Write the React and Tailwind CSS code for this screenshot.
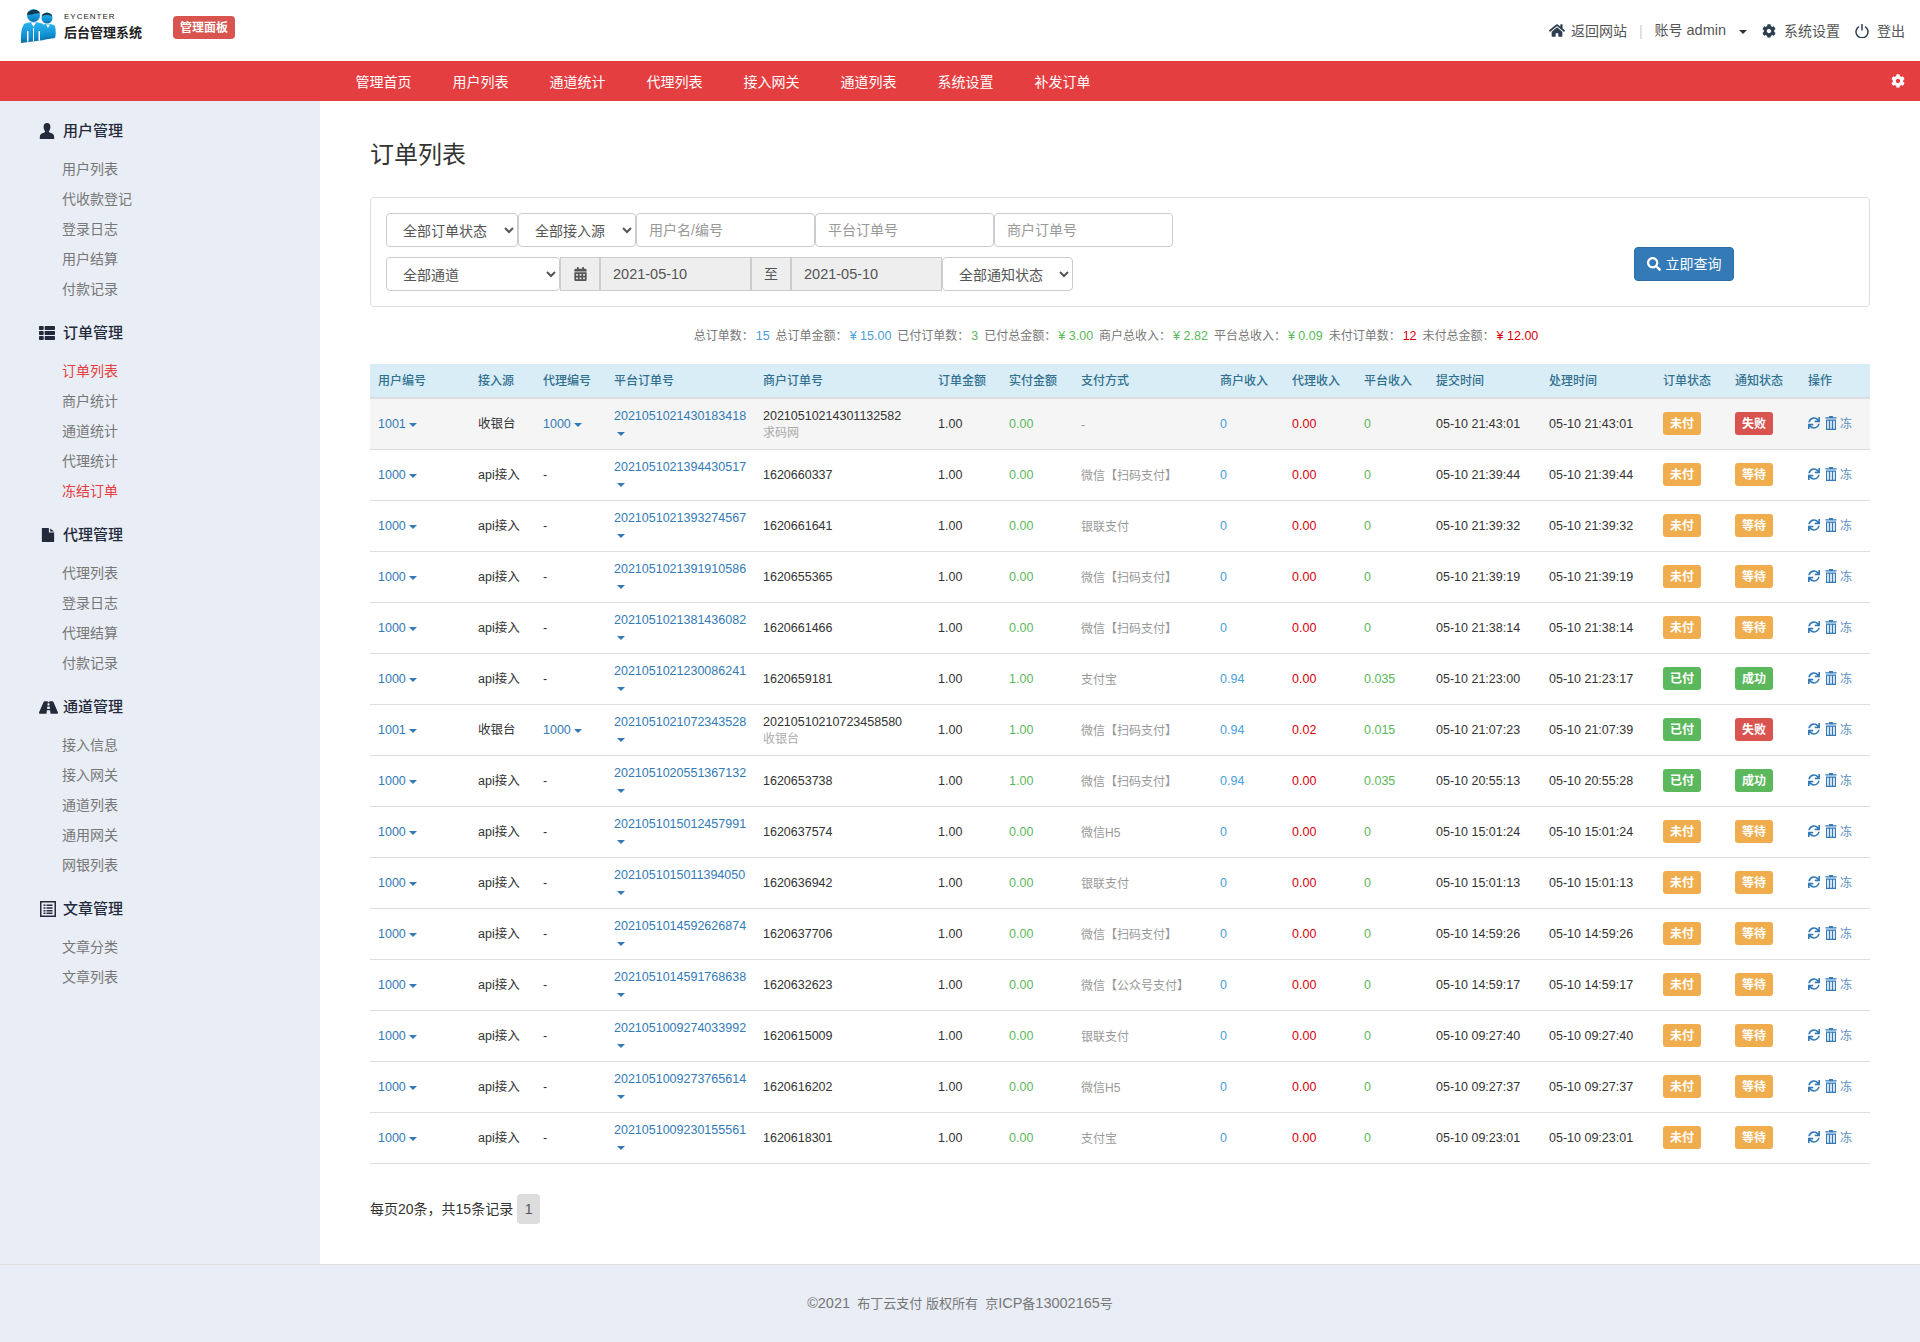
import React from "react";
import { FaThList, FaRoad, FaHome, FaCog, FaSearch, FaCalendarAlt, FaSync } from "react-icons/fa";

const FONT = "font-['Liberation_Sans','Noto_Sans_CJK_SC',sans-serif]";

const SIDE = [
  { title: "用户管理", icon: "user", items: ["用户列表", "代收款登记", "登录日志", "用户结算", "付款记录"] },
  { title: "订单管理", icon: "list", items: ["订单列表", "商户统计", "通道统计", "代理统计", "冻结订单"], active: ["订单列表", "冻结订单"] },
  { title: "代理管理", icon: "file", items: ["代理列表", "登录日志", "代理结算", "付款记录"] },
  { title: "通道管理", icon: "road", items: ["接入信息", "接入网关", "通道列表", "通用网关", "网银列表"] },
  { title: "文章管理", icon: "article", items: ["文章分类", "文章列表"] },
];

const NAV = ["管理首页", "用户列表", "通道统计", "代理列表", "接入网关", "通道列表", "系统设置", "补发订单"];

const COLS = [
  ["用户编号", "w-[100px]"],
  ["接入源", "w-[65px]"],
  ["代理编号", "w-[71px]"],
  ["平台订单号", "w-[149px]"],
  ["商户订单号", "w-[175px]"],
  ["订单金额", "w-[71px]"],
  ["实付金额", "w-[72px]"],
  ["支付方式", "w-[139px]"],
  ["商户收入", "w-[72px]"],
  ["代理收入", "w-[72px]"],
  ["平台收入", "w-[72px]"],
  ["提交时间", "w-[113px]"],
  ["处理时间", "w-[114px]"],
  ["订单状态", "w-[72px]"],
  ["通知状态", "w-[73px]"],
  ["操作", "w-[70px]"],
];

const SCAN = "微信【扫码支付】";

// uid, source, agent, platform no, merchant no, merchant note, paid, method, merchant, agent income, platform, submit, done, notify
const ROWS = [
  ["1001", "收银台", "1000", "2021051021430183418", "20210510214301132582", "求码网", "0.00", "-", "0", "0.00", "0", "21:43:01", "21:43:01", "失败"],
  ["1000", "api接入", "-", "2021051021394430517", "1620660337", "", "0.00", SCAN, "0", "0.00", "0", "21:39:44", "21:39:44", "等待"],
  ["1000", "api接入", "-", "2021051021393274567", "1620661641", "", "0.00", "银联支付", "0", "0.00", "0", "21:39:32", "21:39:32", "等待"],
  ["1000", "api接入", "-", "2021051021391910586", "1620655365", "", "0.00", SCAN, "0", "0.00", "0", "21:39:19", "21:39:19", "等待"],
  ["1000", "api接入", "-", "2021051021381436082", "1620661466", "", "0.00", SCAN, "0", "0.00", "0", "21:38:14", "21:38:14", "等待"],
  ["1000", "api接入", "-", "2021051021230086241", "1620659181", "", "1.00", "支付宝", "0.94", "0.00", "0.035", "21:23:00", "21:23:17", "成功"],
  ["1001", "收银台", "1000", "2021051021072343528", "20210510210723458580", "收银台", "1.00", SCAN, "0.94", "0.02", "0.015", "21:07:23", "21:07:39", "失败"],
  ["1000", "api接入", "-", "2021051020551367132", "1620653738", "", "1.00", SCAN, "0.94", "0.00", "0.035", "20:55:13", "20:55:28", "成功"],
  ["1000", "api接入", "-", "2021051015012457991", "1620637574", "", "0.00", "微信H5", "0", "0.00", "0", "15:01:24", "15:01:24", "等待"],
  ["1000", "api接入", "-", "2021051015011394050", "1620636942", "", "0.00", "银联支付", "0", "0.00", "0", "15:01:13", "15:01:13", "等待"],
  ["1000", "api接入", "-", "2021051014592626874", "1620637706", "", "0.00", SCAN, "0", "0.00", "0", "14:59:26", "14:59:26", "等待"],
  ["1000", "api接入", "-", "2021051014591768638", "1620632623", "", "0.00", "微信【公众号支付】", "0", "0.00", "0", "14:59:17", "14:59:17", "等待"],
  ["1000", "api接入", "-", "2021051009274033992", "1620615009", "", "0.00", "银联支付", "0", "0.00", "0", "09:27:40", "09:27:40", "等待"],
  ["1000", "api接入", "-", "2021051009273765614", "1620616202", "", "0.00", "微信H5", "0", "0.00", "0", "09:27:37", "09:27:37", "等待"],
  ["1000", "api接入", "-", "2021051009230155561", "1620618301", "", "0.00", "支付宝", "0", "0.00", "0", "09:23:01", "09:23:01", "等待"],
];

const BADGE = {
  未付: "bg-[#f0ad4e]",
  已付: "bg-[#5cb85c]",
  失败: "bg-[#d9534f]",
  等待: "bg-[#f0ad4e]",
  成功: "bg-[#5cb85c]",
};

function Logo() {
  return (
    <svg viewBox="0 0 36 36" className="w-[38px] h-[36px] shrink-0">
      <defs>
        <linearGradient id="lg" x1="0" y1="0" x2="0" y2="1">
          <stop offset="0" stopColor="#2ab4f0" />
          <stop offset="0.7" stopColor="#0f8fd0" />
          <stop offset="1" stopColor="#0a6a9e" />
        </linearGradient>
      </defs>
      <circle cx="27" cy="11" r="5.5" fill="url(#lg)" />
      <path d="M21.5 9.5 C23 4.5 31 4.5 32.5 9.5 C30 7.5 24 7.5 21.5 9.5Z" fill="#12384f" />
      <path d="M21 19 C25 16 31 16 35 19 C36 24 36 28 35 31 L22 33Z" fill="url(#lg)" />
      <path d="M26 17.5 L28 21 L30 17.5Z" fill="#fff" />
      <circle cx="13.5" cy="8.5" r="6.5" fill="url(#lg)" />
      <path d="M7 7.5 C8 2 19 1 20 6.5 C16 5 11 9 7 7.5Z" fill="#12384f" />
      <path d="M4 17 C8 14.5 19 14.5 23 17 C25 22 25 28 24.5 33 L1 36 C0.5 28 1.5 21 4 17Z" fill="url(#lg)" />
      <path d="M11 15.5 L13.5 20 L16 15.5Z" fill="#fff" />
      <path d="M7 24 L8.5 24 L8.5 34.5 L7 34.7Z M18.5 24 L20 24 L20 33.6 L18.5 33.8Z M13 21 L14 21 L14 34 L13 34.1Z" fill="#fff" />
    </svg>
  );
}

function SideIcon({ name }) {
  if (name === "user") {
    return (
      <svg viewBox="0 0 16 16" className="w-[16px] h-[16px]" fill="currentColor">
        <path d="M8 0c2.3 0 3.4 1.7 3.4 3.9 0 1.6-.6 3-1.3 4-.4.6-.3 1.1.3 1.4 1.9.9 4.2 1.6 4.6 3.2.2.9.2 2 .2 3.5H.8c0-1.5 0-2.6.2-3.5.4-1.6 2.7-2.3 4.6-3.2.6-.3.7-.8.3-1.4-.7-1-1.3-2.4-1.3-4C4.6 1.7 5.7 0 8 0z" />
      </svg>
    );
  }
  if (name === "list") return <FaThList className="w-[16px] h-[16px]" />;
  if (name === "file") {
    return (
      <svg viewBox="0 0 16 16" className="ml-[2px] w-[14px] h-[16px]" fill="currentColor">
        <path d="M1 0h8v5h6v11H1z" />
        <path d="M10.5 0.5 15 4h-4.5z" />
      </svg>
    );
  }
  if (name === "road") return <FaRoad className="w-[19px] h-[17px]" />;
  return (
    <svg viewBox="0 0 16 16" className="ml-[1px] w-[16px] h-[16px]" fill="currentColor">
      <path fillRule="evenodd" d="M0 0h16v16H0zM1.5 1.5v13h13v-13z" />
      <path d="M3.5 3.5h2v1.5h-2zM6.5 3.5h6v1.5h-6zM3.5 6.2h2v1.5h-2zM6.5 6.2h6v1.5h-6zM3.5 8.9h2v1.5h-2zM6.5 8.9h6v1.5h-6zM3.5 11.5h2V13h-2zM6.5 11.5h6V13h-6z" />
    </svg>
  );
}

function Caret({ color = "border-t-[#337ab7]" }) {
  return <span className={`inline-block w-0 h-0 border-x-[4px] border-t-[4px] border-x-transparent align-middle ${color}`} />;
}

function TrashIcon() {
  return (
    <svg viewBox="0 0 12 14" className="w-[12px] h-[14px]" fill="currentColor">
      <path d="M4 0h4v1.2h3.6v1.3H.4V1.2H4z" />
      <path fillRule="evenodd" d="M1 3.6h10V14H1zM2.2 4.8v8h1.6v-8zm3 0v8h1.6v-8zm3 0v8h1.6v-8z" />
    </svg>
  );
}

function PowerIcon() {
  return (
    <svg viewBox="0 0 14 14" className="w-[14px] h-[14px]" fill="none" stroke="currentColor" strokeWidth="1.5">
      <path d="M4 2.6a6 6 0 1 0 6 0" />
      <path d="M7 0v6.5" />
    </svg>
  );
}

function Sidebar() {
  return (
    <aside className="w-80 shrink-0 bg-[#e9edf5] pt-[15px]">
      {SIDE.map((group) => (
        <div key={group.title} className="mb-[14px]">
          <div className="h-[30px] mb-2 flex items-center text-[15px] font-medium text-[#232a3b]">
            <span className="w-[63px] pl-[39px] flex items-center shrink-0">
              <SideIcon name={group.icon} />
            </span>
            {group.title}
          </div>
          {group.items.map((item) => (
            <div
              key={item}
              className={`h-[30px] pl-[62px] flex items-center text-sm ${
                group.active?.includes(item) ? "text-[#e53e41]" : "text-[#777]"
              }`}
            >
              {item}
            </div>
          ))}
        </div>
      ))}
    </aside>
  );
}

function Select({ label, width }) {
  return (
    <select className={`${width} h-[34px] pl-3 pt-[2px] border border-[#ccc] rounded bg-white text-sm text-[#555]`} defaultValue={label}>
      <option>{label}</option>
    </select>
  );
}

function TextInput({ placeholder }) {
  return (
    <input
      placeholder={placeholder}
      className="w-[179px] h-[34px] px-3 border border-[#ccc] rounded bg-white text-sm text-[#555] placeholder:text-[#999]"
    />
  );
}

function Addon({ children }) {
  return (
    <span className="w-[40px] h-[34px] flex items-center justify-center border border-[#ccc] bg-[#eee] text-sm text-[#555]">
      {children}
    </span>
  );
}

function DateBox({ value }) {
  return (
    <span className="w-[151px] h-[34px] pl-3 pt-[2px] flex items-center border border-[#ccc] bg-[#eee] text-[14.5px] text-[#555]">
      {value}
    </span>
  );
}

function Filter() {
  return (
    <div className="h-[110px] border border-[#ddd] rounded px-[15px] pt-[15px] flex items-start">
      <div className="flex flex-col gap-[10px]">
        <div className="flex">
          <Select label="全部订单状态" width="w-[132px]" />
          <Select label="全部接入源" width="w-[118px]" />
          <TextInput placeholder="用户名/编号" />
          <TextInput placeholder="平台订单号" />
          <TextInput placeholder="商户订单号" />
        </div>
        <div className="flex">
          <Select label="全部通道" width="w-[174px]" />
          <Addon>
            <FaCalendarAlt className="w-[13px] h-[14px]" />
          </Addon>
          <DateBox value="2021-05-10" />
          <Addon>至</Addon>
          <DateBox value="2021-05-10" />
          <Select label="全部通知状态" width="w-[131px]" />
        </div>
      </div>
      <button className="ml-auto mr-[120px] mt-[34px] w-[100px] h-[34px] flex items-center justify-center gap-[5px] rounded bg-[#337ab7] border border-[#2e6da4] text-sm text-white">
        <FaSearch className="w-[14px] h-[14px]" />
        立即查询
      </button>
    </div>
  );
}

function Stats() {
  const items = [
    ["总订单数：", "15", "text-[#4a9edb]"],
    ["总订单金额：", "¥ 15.00", "text-[#4a9edb]"],
    ["已付订单数：", "3", "text-[#5cb85c]"],
    ["已付总金额：", "¥ 3.00", "text-[#5cb85c]"],
    ["商户总收入：", "¥ 2.82", "text-[#5cb85c]"],
    ["平台总收入：", "¥ 0.09", "text-[#5cb85c]"],
    ["未付订单数：", "12", "text-[#d9000c]"],
    ["未付总金额：", "¥ 12.00", "text-[#d9000c]"],
  ];
  return (
    <div className="mt-[20px] mb-[19px] h-[18px] pr-[8px] flex justify-center gap-[6px] text-xs leading-[18px] text-[#777]">
      {items.map(([label, value, color]) => (
        <span key={label}>
          {label}
          <span className={`ml-[2px] text-[12.5px] ${color}`}>{value}</span>
        </span>
      ))}
    </div>
  );
}

function Badge({ text }) {
  return (
    <div className="flex">
      <span className={`flex items-center justify-center w-[38px] h-[23px] rounded-[3px] text-xs font-bold text-white ${BADGE[text]}`}>
        {text}
      </span>
    </div>
  );
}

function OrderRow({ row, striped }) {
  const [uid, source, agent, platformNo, merchantNo, note, paid, method, income, agentIncome, platIncome, t1, t2, notify] = row;
  const payState = paid === "0.00" ? "未付" : "已付";
  const cell = "px-2 align-middle";
  const td = `${cell} pt-[2px]`;
  return (
    <tr className={`h-[51px] border-b border-[#ddd] ${striped ? "bg-[#f5f5f5]" : ""}`}>
      <td className={`${td} text-[#337ab7] text-[12.5px]`}>
        {uid} <Caret />
      </td>
      <td className={`${td} text-[12.5px]`}>{source}</td>
      <td className={`${td} text-[12.5px] ${agent !== "-" ? "text-[#337ab7]" : ""}`}>
        {agent}
        {agent !== "-" && <> <Caret /></>}
      </td>
      <td className={`${td} text-[#337ab7] text-[12.5px] leading-[18px]`}>
        <div>{platformNo}</div>
        <div className="h-[18px] flex items-center pl-[3px]">
          <Caret />
        </div>
      </td>
      <td className={`${td} text-[12.5px] leading-[17px]`}>
        <div>{merchantNo}</div>
        {note && <div className="text-xs text-[#aaa]">{note}</div>}
      </td>
      <td className={`${td} text-[12.5px]`}>1.00</td>
      <td className={`${td} text-[12.5px] text-[#5cb85c]`}>{paid}</td>
      <td className={`${td} text-xs text-[#999] whitespace-nowrap`}>{method}</td>
      <td className={`${td} text-[12.5px] text-[#4a9edb]`}>{income}</td>
      <td className={`${td} text-[12.5px] text-[#d9000c]`}>{agentIncome}</td>
      <td className={`${td} text-[12.5px] text-[#5cb85c]`}>{platIncome}</td>
      <td className={`${td} text-[12.5px] whitespace-nowrap`}>05-10 {t1}</td>
      <td className={`${td} text-[12.5px] whitespace-nowrap`}>05-10 {t2}</td>
      <td className={cell}><Badge text={payState} /></td>
      <td className={cell}><Badge text={notify} /></td>
      <td className={cell}>
        <div className="flex items-center text-[#337ab7]">
          <FaSync className="w-[12px] h-[12px] -mt-[2px]" />
          <span className="ml-[5px] -mt-[2px]"><TrashIcon /></span>
          <span className="ml-[3px] text-xs text-[#5b8fc0]">冻</span>
        </div>
      </td>
    </tr>
  );
}

export default function App() {
  return (
    <div className={`${FONT} w-[1920px] min-h-[1342px] flex flex-col bg-white text-[#333]`}>
      <header className="h-[61px] flex items-start bg-white">
        <div className="pl-[19px] pt-[7px] flex items-start">
          <Logo />
          <div className="ml-[7px] w-[109px]">
            <div className="mt-[6px] h-[7px] text-[8px] leading-[7px] tracking-[1px] text-[#222]">EYCENTER</div>
            <div className="mt-[4px] text-[13px] leading-[18px] font-bold text-[#222]">后台管理系统</div>
          </div>
        </div>
        <span className="mt-4 w-[62px] h-[23px] flex items-center justify-center rounded bg-[#d9534f] text-xs font-bold text-white">管理面板</span>
        <div className="ml-auto pr-[15px] h-[61px] flex items-center text-sm text-[#555]">
          <FaHome className="w-[16px] h-[15px] text-[#2c3e50]" />
          <span className="ml-[6px]">返回网站</span>
          <span className="mx-[12px] text-[#ccc]">|</span>
          <span>账号 <span className="text-[14.5px]">admin</span></span>
          <span className="ml-[13px]"><Caret color="border-t-[#333]" /></span>
          <FaCog className="ml-[15px] w-[14px] h-[14px] text-[#2c3e50]" />
          <span className="ml-[8px]">系统设置</span>
          <span className="ml-[15px] text-[#2c3e50]"><PowerIcon /></span>
          <span className="ml-[8px]">登出</span>
        </div>
      </header>

      <nav className="h-10 bg-[#e53e41] pl-[335px] pr-[15px] flex items-center text-sm text-white">
        {NAV.map((item) => (
          <span key={item} className="w-[97px] pt-[2px] text-center">{item}</span>
        ))}
        <FaCog className="ml-auto w-[14px] h-[14px]" />
      </nav>

      <div className="flex flex-1">
        <Sidebar />
        <main className="flex-1 pl-[50px] pr-[50px] pb-10">
          <h1 className="pt-9 mb-6 text-2xl leading-[36px] font-normal">订单列表</h1>
          <Filter />
          <Stats />
          <table className="w-[1500px] table-fixed border-collapse text-[#333]">
            <colgroup>
              {COLS.map(([name, width]) => (
                <col key={name} className={width} />
              ))}
            </colgroup>
            <thead>
              <tr className="h-[34px] bg-[#d9edf7] border-b-2 border-[#ddd] text-xs text-[#31708f]">
                {COLS.map(([name]) => (
                  <th key={name} className="px-2 text-left font-medium whitespace-nowrap">{name}</th>
                ))}
              </tr>
            </thead>
            <tbody>
              {ROWS.map((row, i) => (
                <OrderRow key={row[3]} row={row} striped={i === 0} />
              ))}
            </tbody>
          </table>
          <div className="mt-[30px] flex items-center text-sm text-[#333]">
            每页20条，共15条记录
            <span className="ml-1 w-[23px] h-[30px] flex items-center justify-center rounded-sm bg-[#ddd] text-[#555]">1</span>
          </div>
        </main>
      </div>

      <footer className="h-[78px] shrink-0 border-t border-[#ddd] bg-[#e9edf5] flex items-center justify-center text-[13px] text-[#777] whitespace-pre">
        <span className="text-[14.5px]">©2021</span>  布丁云支付 版权所有  京<span className="text-[14.5px]">ICP</span>备<span className="text-[14.5px]">13002165</span>号
      </footer>
    </div>
  );
}
